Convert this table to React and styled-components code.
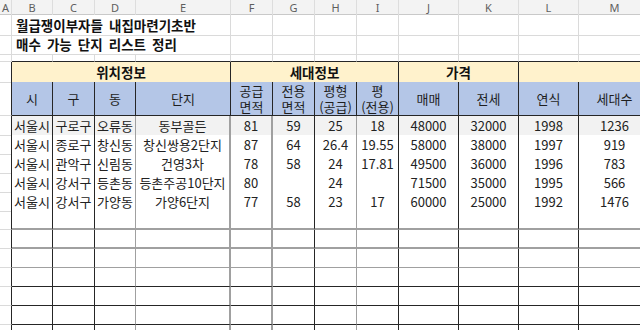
import React from 'react';
import styled, { createGlobalStyle } from 'styled-components';

// sheet geometry (px), taken from the screenshot
const COLS = [12, 41, 42, 41, 95, 42, 42, 42, 42, 60, 60, 60, 72];
const LETTERS = ['A', 'B', 'C', 'D', 'E', 'F', 'G', 'H', 'I', 'J', 'K', 'L', 'M'];
const TEMPLATE = COLS.map((w) => `${w}px`).join(' ');

const GRID = '#dadada';
const INK = '#262626';
const SOFT = '#a0a0a0';

const DATA = [
  ['서울시', '구로구', '오류동', '동부골든', '81', '59', '25', '18', '48000', '32000', '1998', '1236'],
  ['서울시', '종로구', '창신동', '창신쌍용2단지', '87', '64', '26.4', '19.55', '58000', '38000', '1997', '919'],
  ['서울시', '관악구', '신림동', '건영3차', '78', '58', '24', '17.81', '49500', '36000', '1996', '783'],
  ['서울시', '강서구', '등촌동', '등촌주공10단지', '80', '', '24', '', '71500', '35000', '1995', '566'],
  ['서울시', '강서구', '가양동', '가양6단지', '77', '58', '23', '17', '60000', '25000', '1992', '1476'],
];
const EMPTY_ROWS = 7;

// line quirks of the zoomed excel render: some rules come out soft and wide
const SOFT_COLS = { 2: 1, 3: 2, 4: 2, 6: 1 };
const SOFT_ROWS = { 4: 1, 5: 2, 6: 2, 7: 1 };

const HEADS = [
  ['시'], ['구'], ['동'], ['단지'],
  ['공급', '면적'], ['전용', '면적'], ['평형', '(공급)'], ['평', '(전용)'],
  ['매매'], ['전세'], ['연식'], ['세대수'],
];

const GlobalStyle = createGlobalStyle`
  html, body {
    margin: 0;
    padding: 0;
    background: #fff;
  }
  body {
    font-family: "Noto Sans CJK KR", "Noto Sans", sans-serif;
  }
`;

const Sheet = styled.div`
  width: 640px;
  height: 330px;
  overflow: hidden;
  background: #fff;
  color: #1c1c1c;
  font-size: 13px;
`;

const Row = styled.div`
  display: grid;
  grid-template-columns: ${TEMPLATE};
  height: ${(p) => p.$h}px;
`;

const ColBar = styled(Row)`
  box-sizing: border-box;
  background: #f3f3f3;
  border-bottom: 1px solid #c9c9c9;
`;

const ColLabel = styled.div`
  display: flex;
  align-items: center;
  justify-content: center;
  font-family: "Noto Sans", sans-serif;
  font-size: 11px;
  color: #5e5e5e;
  border-right: 1px solid #dddddd;
`;

const Cell = styled.div`
  box-sizing: border-box;
  grid-column: span ${(p) => p.$span || 1};
  display: flex;
  align-items: center;
  justify-content: center;
  min-width: 0;
  white-space: nowrap;
  border-right: 1px solid ${GRID};
  border-bottom: 1px solid ${(p) => (p.$top ? INK : GRID)};
`;

const EdgeCell = styled(Cell)`
  border-right-color: ${INK};
`;

const TitleCell = styled(Cell)`
  justify-content: flex-start;
  padding-left: 4px;
  font-weight: 700;
  font-size: 13.5px;
  word-spacing: 3px;
  color: #111;
`;

const TableCell = styled(Cell)`
  background: ${(p) => p.$bg || '#fff'};
  border-right: ${(p) => p.$rw || 1}px solid ${(p) => (p.$rw ? SOFT : INK)};
  border-bottom: ${(p) => p.$bw || 1}px solid ${(p) => (p.$bw ? SOFT : INK)};
  color: #222;
`;

const GroupCell = styled(TableCell)`
  background: #fff2cc;
  font-weight: 700;
  font-size: 13.5px;
  color: #111;
`;

const HeadCell = styled(TableCell)`
  flex-direction: column;
  background: #b4c6e7;
  line-height: 16px;
  color: #1e1e1e;
`;

const HeadLine = styled.span`
  display: block;
`;

function Gutter() {
  return <Cell />;
}

function App() {
  return (
    <Sheet>
      <GlobalStyle />
      <ColBar $h={15}>
        {LETTERS.map((l) => <ColLabel key={l}>{l}</ColLabel>)}
      </ColBar>

      <Row $h={19}>
        <Gutter />
        <TitleCell $span={4}>월급쟁이부자들 내집마련기초반</TitleCell>
        {LETTERS.slice(5).map((l) => <Cell key={l} />)}
      </Row>
      <Row $h={20}>
        <Gutter />
        <TitleCell $span={4}>매수 가능 단지 리스트 정리</TitleCell>
        {LETTERS.slice(5).map((l) => <Cell key={l} />)}
      </Row>
      <Row $h={8}>
        <Gutter />
        {LETTERS.slice(1).map((l) => <Cell key={l} $top />)}
      </Row>

      <Row $h={20}>
        <EdgeCell />
        <GroupCell $span={4}>위치정보</GroupCell>
        <GroupCell $span={4}>세대정보</GroupCell>
        <GroupCell $span={2}>가격</GroupCell>
        <GroupCell $span={2} />
      </Row>
      <Row $h={34}>
        <EdgeCell />
        {HEADS.map((lines, i) => (
          <HeadCell key={i}>
            {lines.map((t) => <HeadLine key={t}>{t}</HeadLine>)}
          </HeadCell>
        ))}
      </Row>

      {DATA.map((row, r) => (
        <Row $h={19} key={r}>
          <EdgeCell />
          {row.map((v, c) => (
            <TableCell
              key={c}
              $bg={r === 0 ? '#f2f2f2' : '#fff'}
              $rw={SOFT_COLS[c]}
              $bw={SOFT_ROWS[r]}
            >
              {v}
            </TableCell>
          ))}
        </Row>
      ))}

      {Array.from({ length: EMPTY_ROWS }, (_, i) => i + DATA.length).map((r) => (
        <Row $h={19} key={r}>
          <EdgeCell />
          {HEADS.map((_, c) => (
            <TableCell key={c} $rw={SOFT_COLS[c]} $bw={SOFT_ROWS[r]} />
          ))}
        </Row>
      ))}
    </Sheet>
  );
}

export default App;
